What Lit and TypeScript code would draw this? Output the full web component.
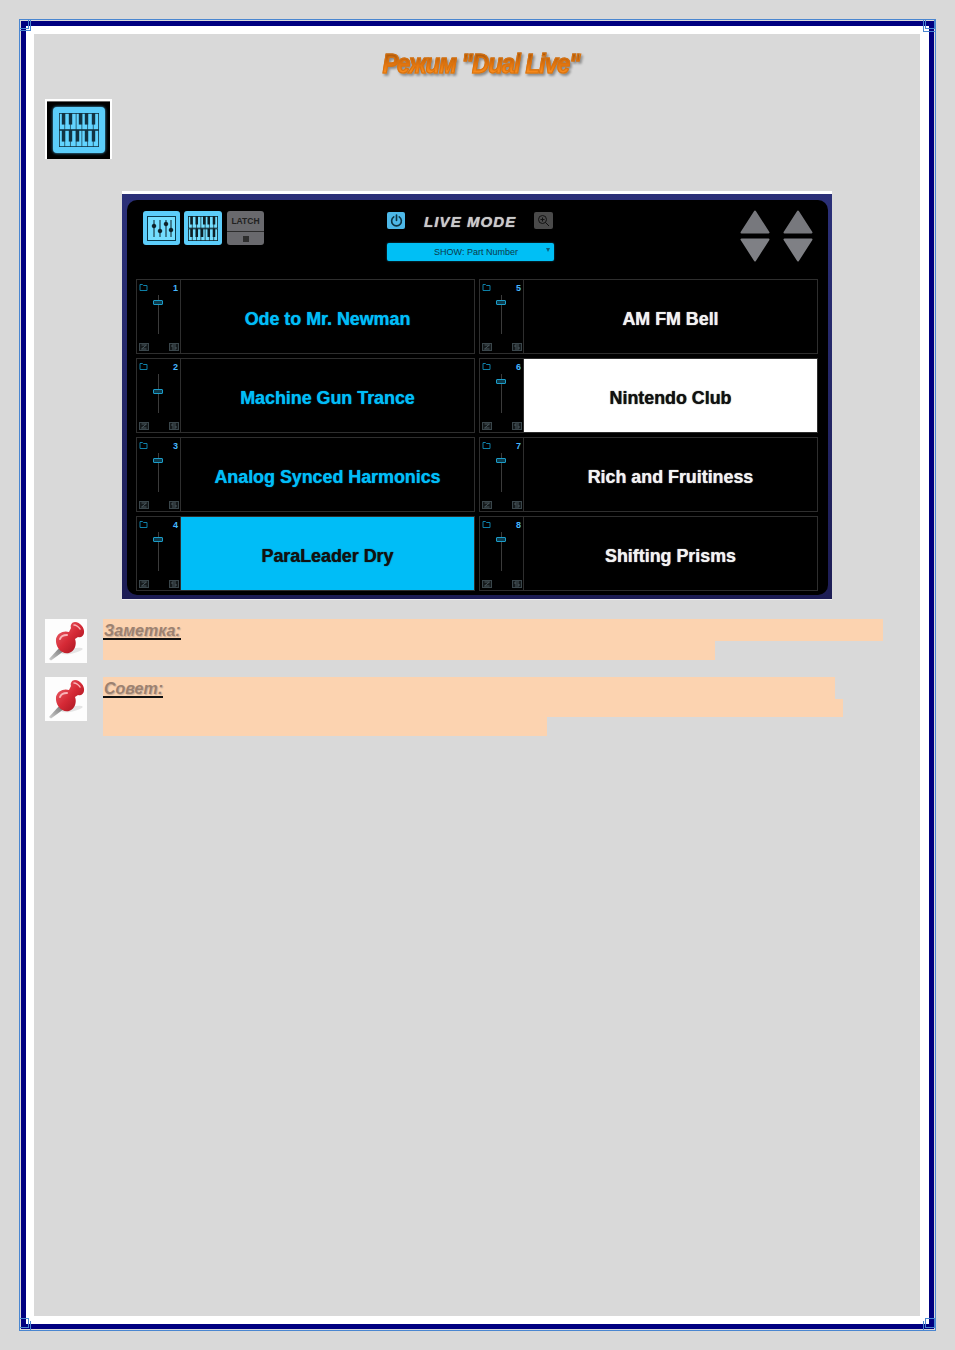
import { LitElement, html, css, svg } from "lit";
import { customElement } from "lit/decorators.js";

const keys = (w: number, h: number, stroke: string, fill: string) => {
  const rowH = h / 2;
  const rows = [
    [0.1, 0.275, 0.525, 0.675, 0.85],
    [0.1, 0.275, 0.45, 0.675, 0.85],
  ];
  const kw = w * 0.085;
  const parts: unknown[] = [];
  rows.forEach((row, r) => {
    for (let c = 1; c < 7; c++) {
      const x = (c * w) / 7;
      parts.push(svg`<line x1=${x} x2=${x} y1=${r * rowH} y2=${(r + 1) * rowH} stroke=${stroke} stroke-width="0.7"/>`);
    }
    for (const p of row) {
      parts.push(svg`<rect x=${p * w - kw / 2 + 0.5} y=${r * rowH} width=${kw} height=${rowH * 0.68} fill=${stroke}/>`);
    }
    parts.push(svg`<rect x="0.4" y=${r * rowH + 0.4} width=${w - 0.8} height=${rowH - 0.8} fill="none" stroke=${stroke} stroke-width="0.8"/>`);
  });
  return svg`<svg width=${w} height=${h} viewBox="0 0 ${w} ${h}" style="display:block;background:${fill}">${parts}</svg>`;
};

const pin = svg`<svg width="42" height="44" viewBox="0 0 42 44">
  <defs>
    <linearGradient id="pinRed" x1="0" y1="0" x2="1" y2="1">
      <stop offset="0" stop-color="#ee6d76"/><stop offset="0.5" stop-color="#d62a36"/><stop offset="1" stop-color="#980f1a"/>
    </linearGradient>
    <linearGradient id="pinNeedle" x1="0" y1="1" x2="1" y2="0">
      <stop offset="0" stop-color="#cfcfcf"/><stop offset="1" stop-color="#6f6f6f"/>
    </linearGradient>
  </defs>
  <ellipse cx="27" cy="32" rx="11" ry="2.500" fill="#e4e4e4" transform="rotate(-12 27 32)"/>
  <path d="M4 40 L15 28 L19 32 L6 41.500 Z" fill="url(#pinNeedle)"/>
  <path d="M11 20 C12 14 19 11 24 13 L26 9 C25 6 27 3 30 3 C35 3 40 9 39 14 C38.500 17 36 19 33 18 L30 20 C32 25 30 32 24 34 C17 36 10 28 11 20 Z" fill="url(#pinRed)"/>
  <path d="M15 20 C16 17 19 16 22 16" stroke="#f9b4b8" stroke-width="2" fill="none" stroke-linecap="round"/>
  <path d="M29 6 C31 6 34 8 35 10" stroke="#f9b4b8" stroke-width="1.500" fill="none" stroke-linecap="round"/>
</svg>`;

const names: [string, string][] = [
  ["Ode to Mr. Newman", ""],
  ["AM FM Bell", "w"],
  ["Machine Gun Trance", ""],
  ["Nintendo Club", "sel-w"],
  ["Analog Synced Harmonics", ""],
  ["Rich and Fruitiness", "w"],
  ["ParaLeader Dry", "sel-b"],
  ["Shifting Prisms", "w"],
];
const numbers = [1, 5, 2, 6, 3, 7, 4, 8];
const thumbTop = [20, 20, 30, 20, 20, 20, 20, 20];

@customElement("app-root")
export class AppRoot extends LitElement {
  static styles = css`
    :host { display: block; width: 955px; height: 1350px; background: #d9d9d9; font-family: "Liberation Sans", Arial, sans-serif; overflow: hidden; }
    .page { position: relative; box-sizing: border-box; width: 955px; height: 1350px; padding: 19px; }
    .outer { box-sizing: border-box; height: 1312px; width: 917px; border: 1px solid #4a86d0; padding: 1px; }
    .navy { box-sizing: border-box; height: 100%; border: 5px solid #000080; }
    .white { box-sizing: border-box; height: 100%; border-style: solid; border-color: #fff; border-width: 8px 9px 8px 8px; background: #d9d9d9; display: flex; flex-direction: column; }
    .corner { position: absolute; box-sizing: border-box; border: 0 solid #4a86d0; }
    .box { width: 10px; height: 10px; border-width: 1px; }
    .c1 { left: 19px; top: 19px; }
    .c1b { left: 19px; top: 19px; width: 12px; height: 12px; border-right-width: 1px; border-bottom-width: 1px; }
    .c2 { left: 925px; top: 19px; }
    .c2b { left: 923px; top: 19px; width: 13px; height: 13px; border-left-width: 1px; border-bottom-width: 1px; }
    .c3 { left: 19px; top: 1318px; }
    .c3b { left: 19px; top: 1321px; width: 12px; height: 10px; border-right-width: 1px; border-bottom-width: 1px; }
    .c4 { left: 925px; top: 1318px; }
    .c4b { left: 923px; top: 1321px; width: 13px; height: 10px; border-left-width: 1px; border-bottom-width: 1px; }

    .title-row { height: 65px; display: flex; justify-content: center; align-items: center; padding: 0 0 5px 9px; box-sizing: border-box; }
    .title {
      font-size: 28px; font-weight: 700; font-style: italic; letter-spacing: -1.1px; line-height: 30px; white-space: nowrap;
      transform: scaleX(0.85);
      background: linear-gradient(180deg, #a9580e 15%, #e0730f 50%, #ff9322 85%);
      -webkit-background-clip: text; background-clip: text; color: transparent;
      -webkit-text-stroke: 1.2px #d9730f;
      filter: drop-shadow(2px 2px 1px #8a8a8a);
    }
    .icon-row { padding-left: 11px; }
    .mode-icon { box-sizing: border-box; width: 67px; height: 60px; background: #000; border-left: 2px solid #fff; border-right: 2px solid #fff; border-top: 2px solid #fff; box-shadow: inset 0 1px 0 #666; display: flex; align-items: center; justify-content: center; }
    .mode-face { width: 52px; height: 46px; border-radius: 4px; background: #5ccdfa; box-shadow: 0 0 3px #4fb8e8; display: flex; align-items: center; justify-content: center; }

    .panel-row { padding: 32px 0 0 88px; }
    .panel { box-sizing: border-box; width: 710px; height: 409px; background: linear-gradient(180deg, #2b3078, #1d1d55); border-top: 3px solid #fff; border-bottom: 1px solid #eee; padding: 6px 4px 4px 5px; }
    .black { position: relative; box-sizing: border-box; height: 100%; background: #000; border-radius: 10px; padding: 79px 10px 0 9px; }
    .top-btn { position: absolute; top: 11px; height: 34px; box-sizing: border-box; border-radius: 3px; background: #5ccdfa; display: flex; align-items: center; justify-content: center; }
    .tb1 { left: 16px; width: 37px; } .tb2 { left: 57px; width: 38px; }
    .tb-in { width: 29px; height: 25px; border: 1px solid #0a3a4c; box-sizing: border-box; display: flex; align-items: center; justify-content: center; background: #74deff; }
    .latch { position: absolute; top: 11px; left: 100px; width: 37px; height: 34px; border-radius: 3px; background: #69696d; display: flex; flex-direction: column; overflow: hidden; }
    .latch-t { height: 20px; font-size: 8.500px; font-weight: 700; color: #222; line-height: 21px; text-align: center; border-bottom: 1px solid #2c2c2c; }
    .latch-b { flex: 1; display: flex; align-items: center; justify-content: center; }
    .latch-b i { width: 6px; height: 6px; background: #2e2e2e; display: block; }
    .power { position: absolute; left: 260px; top: 12px; width: 18px; height: 17px; border-radius: 2px; background: #4db8e8; display: flex; align-items: center; justify-content: center; }
    .live { position: absolute; left: 297px; top: 13px; font-size: 15px; font-weight: 700; font-style: italic; color: #cacaca; letter-spacing: 1.1px; line-height: 17px; white-space: nowrap; text-shadow: 0 0 1px #cacaca; }
    .zoom { position: absolute; left: 407px; top: 12px; width: 19px; height: 17px; border-radius: 2px; background: #4a4a4a; display: flex; align-items: center; justify-content: center; }
    .show { position: absolute; left: 260px; top: 43px; width: 167px; height: 18px; box-sizing: border-box; padding-left: 11px; border-radius: 2px; background: #00bff5; box-shadow: 0 0 2px #0a6a8a; font-size: 9px; line-height: 18px; color: #0a3a4a; text-align: center; }
    .show::after { content: ""; position: absolute; right: 4px; top: 5px; border-left: 2.500px solid transparent; border-right: 2.500px solid transparent; border-top: 4px solid #0a5f7c; }
    .arrow { position: absolute; }
    .a1 { left: 613px; top: 10px; } .a2 { left: 656px; top: 10px; } .a3 { left: 613px; top: 38px; } .a4 { left: 656px; top: 38px; }

    .grid { display: grid; grid-template-columns: 339px 339px; column-gap: 4px; grid-auto-rows: 75px; row-gap: 4px; }
    .cell { display: flex; box-sizing: border-box; border: 1px solid #2e2e2e; }
    .strip { position: relative; box-sizing: border-box; width: 44px; flex: none; border-right: 1px solid #2e2e2e; }
    .folder { position: absolute; left: 2px; top: 4px; display: block; }
    .num { position: absolute; right: 2px; top: 3px; font-size: 9px; font-weight: 700; color: #46b6ff; line-height: 10px; }
    .track { position: absolute; left: 21px; top: 15px; width: 1px; height: 39px; background: #3b3b3b; }
    .thumb { position: absolute; left: 16px; width: 8px; height: 3px; border: 1px solid #1b9cc8; border-radius: 1px; background: #0d3a4a; }
    .sq { position: absolute; bottom: 2px; display: block; }
    .sq.l { left: 2px; } .sq.r { right: 1px; }
    .name { flex: 1; display: flex; align-items: center; justify-content: center; font-size: 17.850px; font-weight: 700; color: #00bdf7; background: #000; padding-top: 5px; box-sizing: border-box; text-shadow: 0 0 1px currentColor; }
    .name.w { color: #f2f2f2; }
    .name.sel-w { background: #fff; color: #111; }
    .name.sel-b { background: #00bdf7; color: #111; }

    .notes { display: flex; flex-direction: column; padding: 19px 0 0 11px; gap: 14px; }
    .note { display: flex; align-items: flex-start; gap: 16px; }
    .pin { width: 42px; height: 44px; background: #fdfdfd; flex: none; }
    .lines { display: flex; flex-direction: column; align-items: flex-start; }
    .bar { background: #fcd3b0; }
    .l-a { width: 780px; height: 22px; } .l-b { width: 612px; height: 19px; }
    .l-c { width: 732px; height: 22px; } .l-d { width: 740px; height: 18px; } .l-e { width: 444px; height: 19px; }
    .lbl { display: inline-block; font-size: 16px; font-style: italic; font-weight: 700; color: #9c8170; line-height: 14px; padding: 5px 0 0 1px; border-bottom: 2px solid #111; text-shadow: 1px 1px 1px #c9b09c; }
  `;

  render() {
    const arrowUp = svg`<svg class="arrow" width="30" height="24" viewBox="0 0 30 24"><path d="M15 1.500 L28.500 22.500 L1.500 22.500 Z" fill="#77787d" stroke="#77787d" stroke-width="2" stroke-linejoin="round"/></svg>`;
    const arrowDn = svg`<svg class="arrow" width="30" height="24" viewBox="0 0 30 24"><path d="M1.500 1.500 L28.500 1.500 L15 22.500 Z" fill="#7f8085" stroke="#7f8085" stroke-width="2" stroke-linejoin="round"/></svg>`;
    const folder = svg`<svg class="folder" width="9" height="7" viewBox="0 0 9 7" fill="none" stroke="#0e7fa6" stroke-width="1"><path d="M1 .5H3.500L4.500 1.500H8V6.500H1Z"/></svg>`;
    const sq = (c: string, d: string) => svg`<svg class="sq ${c}" width="10" height="8" viewBox="0 0 10 8"><rect x=".5" y=".5" width="9" height="7" fill="#14191b" stroke="#3a464b"/><path d=${d} stroke="#4a585e" fill="none"/></svg>`;
    return html`
      <div class="page">
        <div class="outer"><div class="navy"><div class="white">
          <div class="title-row"><div class="title">Режим "Dual Live"</div></div>
          <div class="icon-row"><div class="mode-icon"><div class="mode-face">${keys(40, 34, "#123342", "#62d4ff")}</div></div></div>
          <div class="panel-row"><div class="panel"><div class="black">
            <div class="top-btn tb1"><div class="tb-in">
              <svg width="24" height="19" viewBox="0 0 24 19" fill="none" stroke="#0d1f26" stroke-width="1">
                <path d="M4 1V18M10 1V18M16 1V18M21 1V18"/>
                <circle cx="4" cy="7" r="1.800" fill="#0d1f26"/><circle cx="10" cy="12" r="1.800" fill="#0d1f26"/><circle cx="16" cy="5" r="1.800" fill="#0d1f26"/><circle cx="21" cy="11" r="1.800" fill="#0d1f26"/>
              </svg>
            </div></div>
            <div class="top-btn tb2">${keys(30, 25, "#0d1f26", "#74deff")}</div>
            <div class="latch"><div class="latch-t">LATCH</div><div class="latch-b"><i></i></div></div>
            <div class="power"><svg width="13" height="13" viewBox="0 0 12 12" fill="none" stroke="#0b3344" stroke-width="1.500" stroke-linecap="round"><path d="M3.500 2.700 A4.500 4.500 0 1 0 8.500 2.700"/><path d="M6 1V6"/></svg></div>
            <div class="live">LIVE MODE</div>
            <div class="zoom"><svg width="13" height="13" viewBox="0 0 13 13" fill="none" stroke="#111" stroke-width="1"><circle cx="5.500" cy="5.500" r="4"/><path d="M3.500 5.500H7.500M5.500 3.500V7.500M8.500 8.500L12 12"/></svg></div>
            <div class="show">SHOW: Part Number</div>
            <div class="a1 arrow">${arrowUp}</div><div class="a2 arrow">${arrowUp}</div><div class="a3 arrow">${arrowDn}</div><div class="a4 arrow">${arrowDn}</div>
            <div class="grid">
              ${names.map(([n, c], i) => html`
                <div class="cell">
                  <div class="strip">
                    ${folder}<span class="num">${numbers[i]}</span>
                    <span class="track"></span><span class="thumb" style="top:${thumbTop[i]}px"></span>
                    ${sq("l", "M2.500 2H7.500L2.500 6H7.500")}${sq("r", "M7 2H3V4H7V6H3")}
                  </div>
                  <div class="name ${c}">${n}</div>
                </div>`)}
            </div>
          </div></div></div>
          <div class="notes">
            <div class="note">
              <div class="pin">${pin}</div>
              <div class="lines">
                <div class="bar l-a"><span class="lbl">Заметка:</span></div>
                <div class="bar l-b"></div>
              </div>
            </div>
            <div class="note">
              <div class="pin">${pin}</div>
              <div class="lines">
                <div class="bar l-c"><span class="lbl">Совет:</span></div>
                <div class="bar l-d"></div>
                <div class="bar l-e"></div>
              </div>
            </div>
          </div>
        </div></div></div>
        <span class="corner box c1"></span><span class="corner c1b"></span>
        <span class="corner box c2"></span><span class="corner c2b"></span>
        <span class="corner box c3"></span><span class="corner c3b"></span>
        <span class="corner box c4"></span><span class="corner c4b"></span>
      </div>
    `;
  }
}
